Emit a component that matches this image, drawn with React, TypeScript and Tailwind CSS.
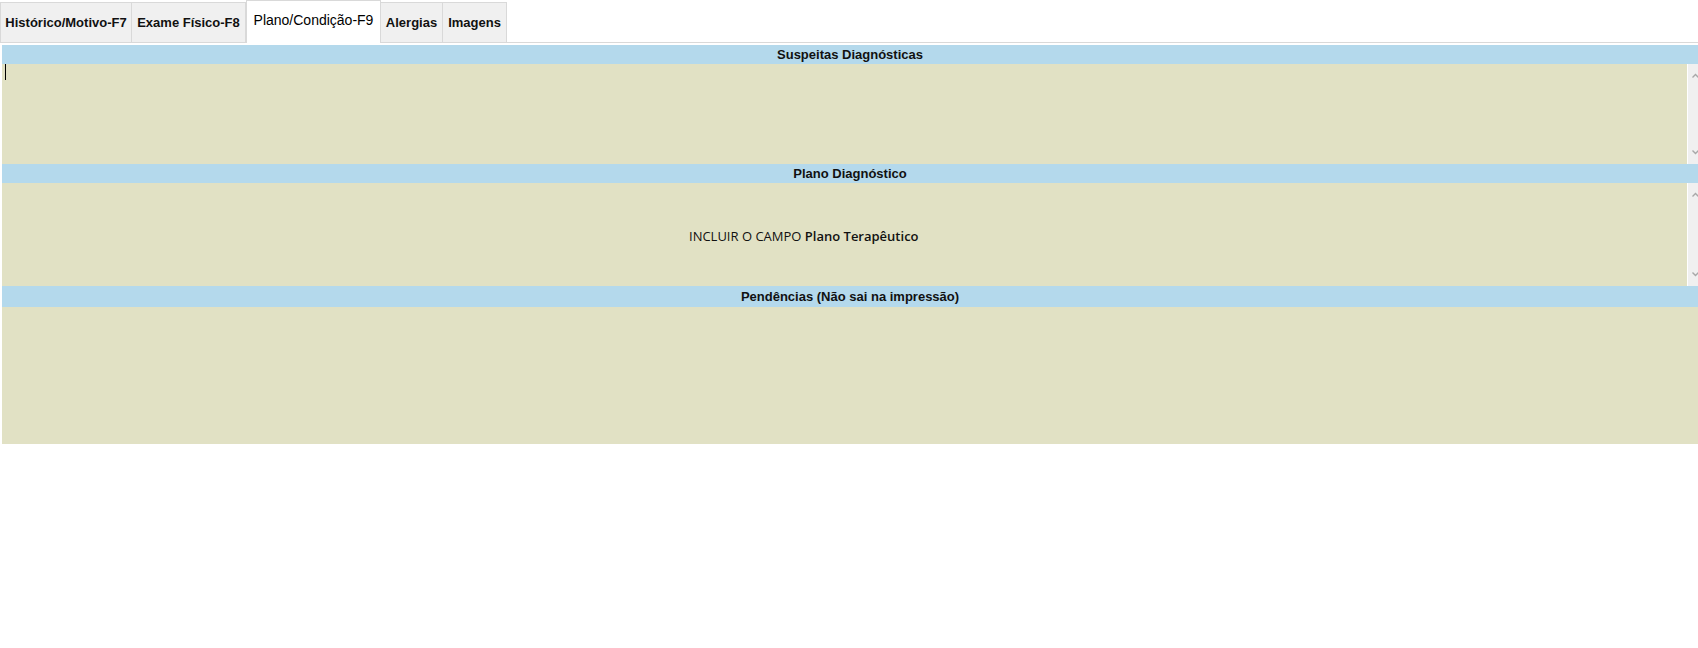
const tabs = [
  { label: "Histórico/Motivo-F7", width: "w-[132px]", active: false },
  { label: "Exame Físico-F8", width: "w-[114px]", active: false },
  { label: "Plano/Condição-F9", width: "w-[135px]", active: true },
  { label: "Alergias", width: "w-[62px]", active: false },
  { label: "Imagens", width: "w-[64px]", active: false },
];

const ScrollBar = () => (
  <div className="w-[11px] shrink-0 border-l border-white bg-[#f0f0f0] flex flex-col justify-between items-end py-[9px]">
    <svg width="7" height="5" viewBox="0 0 7 5" className="mr-[-1px]">
      <path d="M0.5 4.5 L3.5 1.5 L6.5 4.5" fill="none" stroke="#a8a8a8" strokeWidth="1.4" />
    </svg>
    <svg width="7" height="5" viewBox="0 0 7 5" className="mr-[-1px]">
      <path d="M0.5 0.5 L3.5 3.5 L6.5 0.5" fill="none" stroke="#a8a8a8" strokeWidth="1.4" />
    </svg>
  </div>
);

const SectionHeader = ({ title, tall }: { title: string; tall?: boolean }) => (
  <div
    className={`${tall ? "h-[21px]" : "h-[19px]"} bg-[#b4d9ec] flex items-center justify-center text-[13px] font-bold text-[#111] font-['Liberation_Sans',Arial,sans-serif]`}
  >
    {title}
  </div>
);

export default function App() {
  return (
    <div className="w-[1698px] h-[648px] bg-white overflow-hidden">
      {/* Tabs */}
      <div className="flex items-end h-[43px] border-b border-[#d9d9d9]">
        {tabs.map((tab) =>
          tab.active ? (
            <div
              key={tab.label}
              className={`${tab.width} h-[43px] -mb-px bg-white border border-b-0 border-[#d9d9d9] flex items-center justify-center pb-[4px] text-[14px] text-black font-['Liberation_Sans',Arial,sans-serif]`}
            >
              {tab.label}
            </div>
          ) : (
            <div
              key={tab.label}
              className={`${tab.width} h-[40px] bg-[#f0f0f0] border border-b-0 border-l-0 first:border-l border-[#d9d9d9] flex items-center justify-center text-[13px] font-bold text-[#111] font-['Liberation_Sans',Arial,sans-serif]`}
            >
              {tab.label}
            </div>
          )
        )}
      </div>

      {/* Content */}
      <div className="mt-[2px] pl-[2px]">
        <SectionHeader title="Suspeitas Diagnósticas" />
        <div className="h-[100px] flex">
          <div className="flex-1 bg-[#e1e1c4] pl-[3px]">
            <div className="w-px h-[16px] bg-black" />
          </div>
          <ScrollBar />
        </div>

        <SectionHeader title="Plano Diagnóstico" />
        <div className="h-[103px] flex">
          <div className="flex-1 bg-[#e1e1c4] pl-[687px] pt-[44px] text-[13px] text-[#111] font-['Open_Sans',sans-serif]">
            INCLUIR O CAMPO <span className="font-semibold">Plano Terapêutico</span>
          </div>
          <ScrollBar />
        </div>

        <SectionHeader title="Pendências (Não sai na impressão)" tall />
        <div className="h-[137px] bg-[#e1e1c4]" />
      </div>
    </div>
  );
}
